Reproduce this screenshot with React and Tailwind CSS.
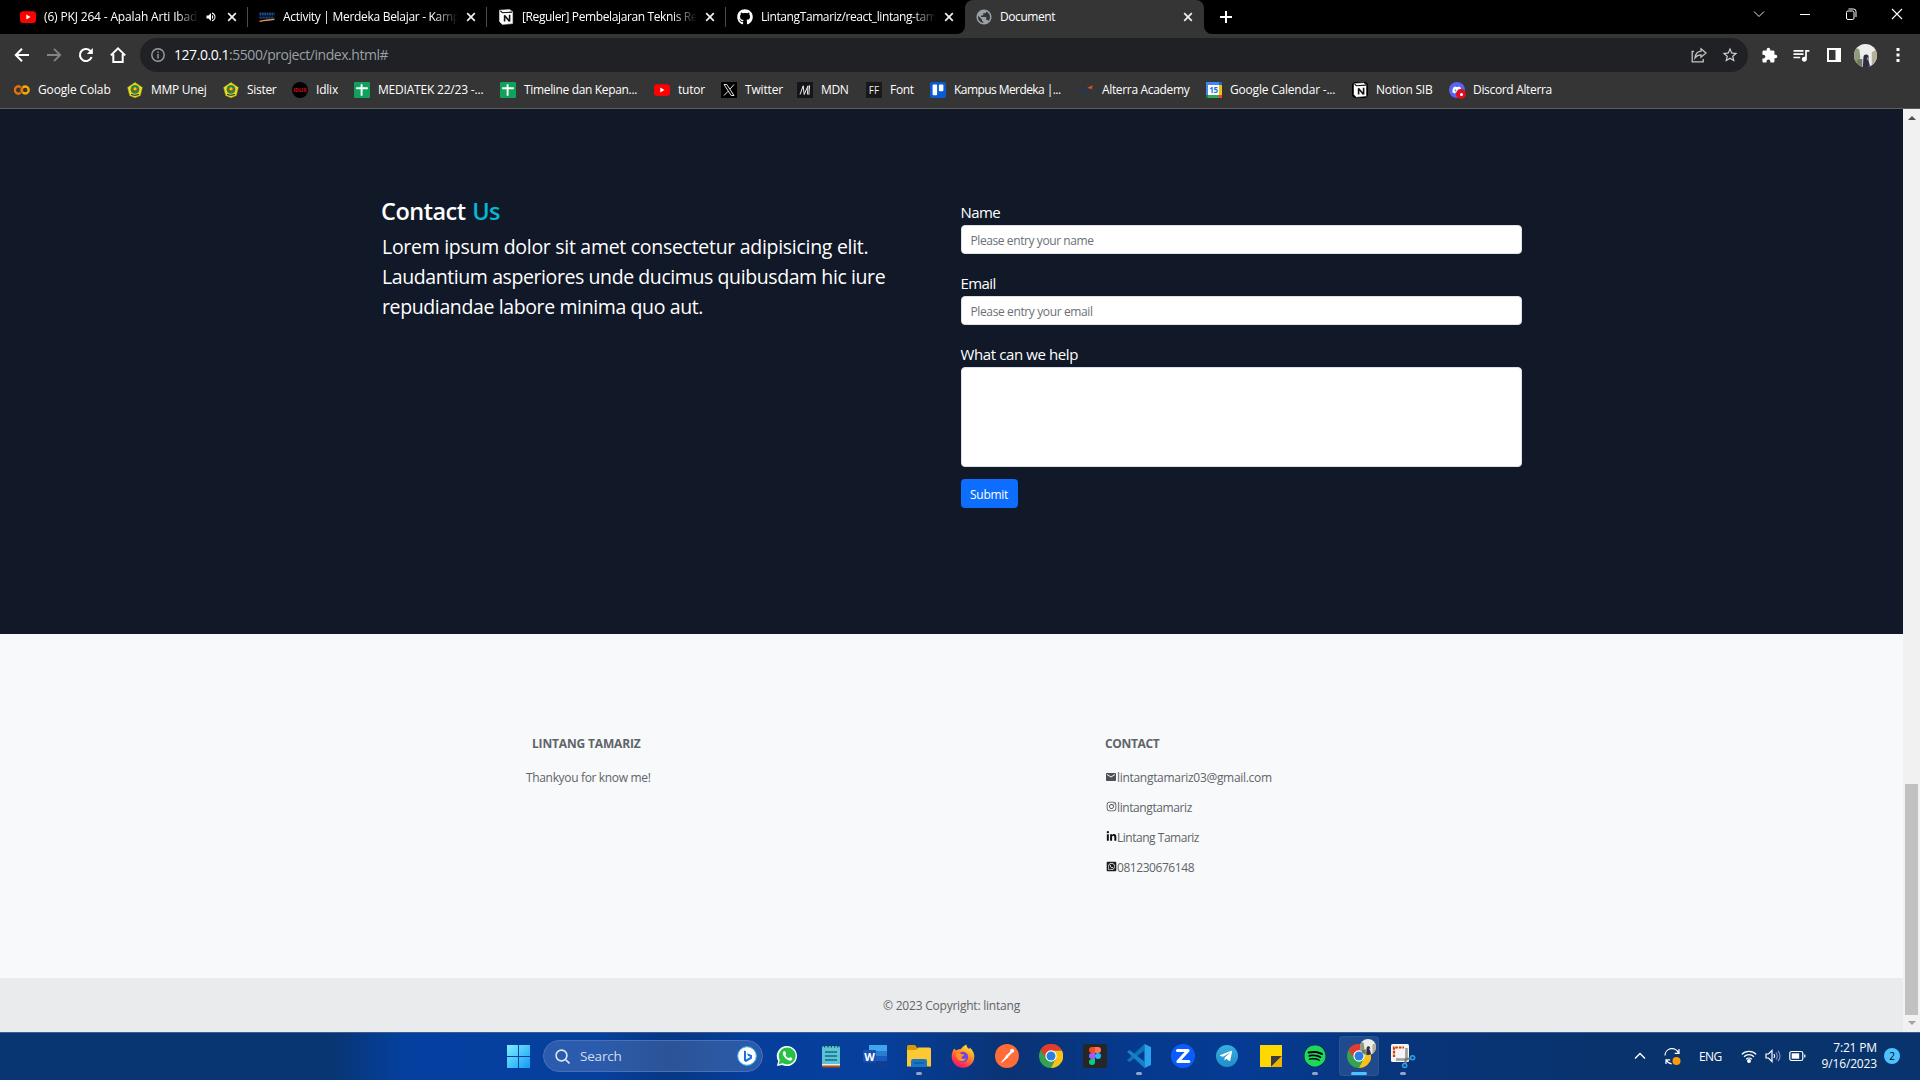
import { FaGithub, FaSpotify, FaDiscord, FaLinkedinIn, FaWhatsappSquare, FaInstagram, FaTelegramPlane } from "react-icons/fa";
import { MdEmail, MdExtension, MdQueueMusic, MdPublic, MdVolumeUp, MdStarBorder } from "react-icons/md";

/* ---------- small shared pieces ---------- */

function YoutubeIcon() {
  return (
    <svg viewBox="0 0 16 16" className="size-4">
      <rect y="2.3" width="16" height="11.6" rx="3" fill="#f00" />
      <path d="M6.3 5.6v5l4.2-2.5z" fill="#fff" />
    </svg>
  );
}

function NotionIcon({ dark }) {
  return (
    <div className={dark ? "flex size-4 items-center justify-center rounded-sm bg-black" : "flex size-4 items-center justify-center"}>
      <svg viewBox="0 0 16 16" className="size-4">
        <path d="M1.5 1.2 11.6.6 14.6 2.8V14.6L4.2 15.4 1.5 12.4z" fill="#fff" stroke={dark ? "#000" : "#ddd"} strokeWidth=".6" />
        <path d="M2.4 1.9 4.3 3.7 14 3.1" fill="none" stroke="#111" strokeWidth="1.1" />
        <path d="M6.6 12.6V6.2M6.4 6.2 11.6 12.4M11.6 12.6V5.8" fill="none" stroke="#111" strokeWidth="1.6" />
      </svg>
    </div>
  );
}

function KampusIcon() {
  return (
    <svg viewBox="0 0 16 16" className="size-4">
      <path d="M.5 5h15" stroke="#1a4f94" strokeWidth="3" strokeDasharray="1.8 .6" />
      <path d="M.5 8.6h15" stroke="#143f78" strokeWidth="2.4" strokeDasharray="2.4 .5" />
      <path d="M.5 12.4c5-1.3 9-1.2 15-2" stroke="#e89a4f" strokeWidth="1.3" fill="none" />
    </svg>
  );
}

function CrestIcon() {
  return (
    <svg viewBox="0 0 16 16" className="size-4">
      <path d="M8 .4 15.4 5.4 13.3 13.6 8 15.8 2.7 13.6.6 5.4z" fill="#e9dc28" stroke="#b9ac16" strokeWidth=".5" />
      <circle cx="8" cy="7.4" r="4.4" fill="#1c8a3f" />
      <path d="M5.2 8.4a2.8 3.2 0 0 1 5.6 0z" fill="#e33b22" />
      <circle cx="8" cy="6.8" r="1.5" fill="#f3c41f" />
      <path d="M4.2 12.3q3.8 2 7.6 0" stroke="#222" strokeWidth="1.1" fill="none" />
    </svg>
  );
}

function SheetIcon() {
  return (
    <svg viewBox="0 0 16 16" className="size-4">
      <rect width="16" height="16" rx="1" fill="#10a15c" />
      <path d="M2.2 6.2h11.6M7.6 2.2v11.6" stroke="#fff" strokeWidth="1.9" />
    </svg>
  );
}

function ColabIcon() {
  return (
    <svg viewBox="0 0 16 16" className="size-4" fill="none" strokeWidth="2.3">
      <path d="M6.6 5.3A3.5 3.5 0 1 0 6.6 10.7" stroke="#e8710a" />
      <circle cx="11.2" cy="8" r="3.5" stroke="#f9ab00" />
      <path d="M8.8 10.6A3.5 3.5 0 0 1 8.8 5.4" stroke="#e8710a" />
    </svg>
  );
}

function ChromeIcon() {
  return (
    <svg viewBox="0 0 24 24" className="size-6">
      <circle cx="12" cy="12" r="12" fill="#34a350" />
      <path d="M12 6.5H22.9A12 12 0 0 1 12 24L16.76 14.75z" fill="#fbc116" />
      <path d="M12 6.5H22.9A12 12 0 0 0 1.6 6L7.24 14.75A5.5 5.5 0 0 1 12 6.5z" fill="#e33b2e" />
      <circle cx="12" cy="12" r="5.7" fill="#fff" />
      <circle cx="12" cy="12" r="4.5" fill="#2a7de1" />
    </svg>
  );
}

function CloseIcon() {
  return (
    <svg viewBox="0 0 16 16" className="size-4 shrink-0" stroke="#f1f1f1" strokeWidth="1.7">
      <path d="M4.2 4.2l7.6 7.6M11.8 4.2l-7.6 7.6" />
    </svg>
  );
}

function Avatar({ className }) {
  return (
    <svg viewBox="0 0 22 22" className={className}>
      <clipPath id="avatarClip"><circle cx="11" cy="11" r="11" /></clipPath>
      <g clipPath="url(#avatarClip)">
        <rect width="22" height="22" fill="#eceeea" />
        <path d="M0 3 5 5 6 12 5 22H0z" fill="#8d9a7b" />
        <path d="M17 8 22 5V22H17z" fill="#b3b19a" />
        <path d="M3 15 8 14 8 22H2z" fill="#6f7b62" />
        <path d="M9 13q0-3 2.600-3t2.400 2.600l-.3 2.400 1.800 7H8.500z" fill="#2a2d45" />
        <path d="M12.300 12.800h1.600v2.200h-1.600z" fill="#b98a74" />
      </g>
    </svg>
  );
}

/* ---------- browser tabs ---------- */

function Tab({ icon, title, sound, active, divider, tracking }) {
  return (
    <div className={active ? "relative flex h-[34px] w-[239px] items-center rounded-t-lg bg-[#353535] pl-[11px] pr-2" : "relative flex h-[34px] w-[239px] items-center pl-[11px] pr-2"}>
      <div className="size-4 shrink-0">{icon}</div>
      <div className={(sound ? "w-[154px] " : "w-[175px] ") + "ml-2 overflow-hidden whitespace-nowrap text-xs text-white " + tracking + (active ? "" : " [mask-image:linear-gradient(to_right,#000_86%,transparent)]")}>{title}</div>
      {sound && <MdVolumeUp className="ml-[7px] size-3 shrink-0 text-white" />}
      <div className="ml-auto"><CloseIcon /></div>
      {divider && <div className="absolute right-0 top-[7px] h-5 w-px bg-[#4d4d4d]" />}
      {active && (
        <>
          <svg viewBox="0 0 8 8" className="absolute -left-2 bottom-0 size-2"><path d="M8 0v8H0a8 8 0 0 0 8-8" fill="#353535" /></svg>
          <svg viewBox="0 0 8 8" className="absolute -right-2 bottom-0 size-2"><path d="M0 0v8h8a8 8 0 0 1-8-8" fill="#353535" /></svg>
        </>
      )}
    </div>
  );
}

function TabStrip() {
  return (
    <div className="flex h-[34px] bg-black pl-[9px]">
      <Tab icon={<YoutubeIcon />} title="(6) PKJ 264 - Apalah Arti Ibadah" sound divider tracking="tracking-[-0.16px]" />
      <Tab icon={<KampusIcon />} title="Activity | Merdeka Belajar - Kampus" divider tracking="tracking-[-0.3px]" />
      <Tab icon={<NotionIcon />} title="[Reguler] Pembelajaran Teknis Reac" divider tracking="tracking-[-0.38px]" />
      <Tab icon={<FaGithub className="size-4 text-white" />} title="LintangTamariz/react_lintang-tamariz" tracking="tracking-[-0.4px]" />
      <Tab icon={<MdPublic className="-m-px size-[18px] text-[#9aa0a6]" />} title="Document" active tracking="tracking-[-0.42px]" />
      <svg viewBox="0 0 14 14" className="ml-[15px] mt-2.5 size-3.5" stroke="#fff" strokeWidth="2"><path d="M7 1v12M1 7h12" /></svg>
      <div className="ml-auto flex h-7 items-center">
        <svg viewBox="0 0 12 12" className="mr-[34px] size-3" fill="none" stroke="#e8e8e8"><path d="M1 3.5l5 5 5-5" /></svg>
        <svg viewBox="0 0 12 12" className="mr-[34px] size-3" stroke="#fff"><path d="M1 6.5h10" /></svg>
        <svg viewBox="0 0 12 12" className="mr-[34px] size-3" fill="none" stroke="#fff"><rect x="1.5" y="3" width="7.5" height="8.5" rx="1.5" /><path d="M3.5 1h5a2.5 2.5 0 0 1 2.5 2.5V9" /></svg>
        <svg viewBox="0 0 12 12" className="mr-[17px] size-3" stroke="#fff" strokeWidth="1.1"><path d="M1 1l10 10M11 1L1 11" /></svg>
      </div>
    </div>
  );
}

/* ---------- address bar ---------- */

function Toolbar() {
  return (
    <div className="flex h-[42px] items-center bg-[#353535] pl-3.5">
      <svg viewBox="0 0 16 16" className="mr-4 size-4" fill="none" stroke="#fff" strokeWidth="2"><path d="M15 8H2M8 1.8 1.8 8 8 14.2" /></svg>
      <svg viewBox="0 0 16 16" className="mr-4 size-4" fill="none" stroke="#848484" strokeWidth="1.8"><path d="M1 8h13M8 1.8 14.2 8 8 14.2" /></svg>
      <svg viewBox="0 0 16 16" className="mr-4 size-4" fill="none" stroke="#fff" strokeWidth="2.1"><path d="M13.6 10A6 6 0 1 1 12.2 3.8L14 5.4" /><path d="M14.8 1v6h-6z" fill="#fff" stroke="none" /></svg>
      <svg viewBox="0 0 16 16" className="mr-[14px] size-4" fill="none" stroke="#fff" strokeWidth="2"><path d="M.8 8.4 8 1.4l7.2 7M3.3 7v8h9.4V7" /></svg>
      <div className="flex h-[34px] w-[1608px] items-center rounded-full bg-[#202124] pl-[11px] pr-[9px]">
        <svg viewBox="0 0 14 14" className="size-3.5" fill="none" stroke="#9aa0a6" strokeWidth="1.4"><circle cx="7" cy="7" r="6.2" /><path d="M7 6v4.4M7 3.4v1.5" /></svg>
        <div className="ml-[9px] whitespace-nowrap text-sm tracking-[-0.45px] text-[#9aa0a6]"><span className="text-white">127.0.0.1</span>:5500/project/index.html#</div>
        <svg viewBox="0 0 16 16" className="ml-auto size-4" fill="none" stroke="#c4c4c4" strokeWidth="1.3"><path d="M3 4.5H1.2v10.4h11v-3" /><path d="M10 1.8 15 6l-5 4.2V7.8C7.4 7.8 5.500 8.800 4 10.800 4.500 7 6.600 4.500 10 4.200z" /></svg>
        <MdStarBorder className="ml-[14px] size-[18px] text-[#d0d0d0]" />
      </div>
      <MdExtension className="ml-[13px] size-[17px] text-white" />
      <MdQueueMusic className="ml-[13px] size-[20px] text-white" />
      <svg viewBox="0 0 14 14" className="ml-[16px] size-3.5" fill="none" stroke="#fff" strokeWidth="2"><path d="M1 1h12v12H1z" /><path d="M8.5 1h4.500v12H8.500z" fill="#fff" stroke="none" /></svg>
      <Avatar className="ml-[13px] size-[23px]" />
      <svg viewBox="0 0 4 16" className="ml-[19px] h-4 w-1" fill="#fff"><rect x=".5" y="1" width="3" height="3" /><rect x=".5" y="6.500" width="3" height="3" /><rect x=".5" y="12" width="3" height="3" /></svg>
    </div>
  );
}

/* ---------- bookmarks ---------- */

const bookmarks = [
  { label: "Google Colab", cell: "w-[113px]", tracking: "tracking-[-0.15px]", icon: <ColabIcon /> },
  { label: "MMP Unej", cell: "w-[96px]", tracking: "tracking-[-0.29px]", icon: <CrestIcon /> },
  { label: "Sister", cell: "w-[69px]", tracking: "tracking-[-0.3px]", icon: <CrestIcon /> },
  { label: "Idlix", cell: "w-[62px]", tracking: "tracking-[-0.2px]", icon: <div className="flex size-4 items-center justify-center rounded-full bg-black text-[5px] font-bold leading-none text-[#e50914]">IDLIX</div> },
  { label: "MEDIATEK 22/23 -...", cell: "w-[146px]", tracking: "tracking-[-0.2px]", icon: <SheetIcon /> },
  { label: "Timeline dan Kepan...", cell: "w-[154px]", tracking: "tracking-[-0.34px]", icon: <SheetIcon /> },
  { label: "tutor", cell: "w-[67px]", tracking: "tracking-[-0.2px]", icon: <YoutubeIcon /> },
  { label: "Twitter", cell: "w-[76px]", tracking: "tracking-[-0.15px]", icon: <svg viewBox="0 0 16 16" className="size-4" fill="none" stroke="#fff"><rect width="16" height="16" fill="#000" stroke="none" /><path d="M3 2.500h2.800l7.200 11h-2.800zM13 2.500 9 7M7 9.300l-4 4.200" strokeWidth=".9" /></svg> },
  { label: "MDN", cell: "w-[69px]", tracking: "tracking-[-0.35px]", icon: <svg viewBox="0 0 16 16" className="size-4"><rect width="16" height="16" fill="#15141a" /><path d="M3 12.500 6.200 3.800 7.200 12.500 11 3.800 10.400 12.500M12.600 3.400l-.8 9.400" fill="none" stroke="#eee" strokeWidth="1" /></svg> },
  { label: "Font", cell: "w-[64px]", tracking: "tracking-[-0.3px]", icon: <div className="flex size-4 items-center justify-center bg-[#181818] text-[10px] leading-none text-[#eee]">FF</div> },
  { label: "Kampus Merdeka |...", cell: "w-[149px]", tracking: "tracking-[-0.57px]", icon: <svg viewBox="0 0 16 16" className="size-4"><rect width="16" height="16" rx="2" fill="#0b5bd3" /><rect x="2.600" y="2.600" width="4.500" height="10.600" rx="1" fill="#fff" /><rect x="8.900" y="2.600" width="4.500" height="6.600" rx="1" fill="#fff" /></svg> },
  { label: "Alterra Academy", cell: "-ml-px w-[128px]", tracking: "tracking-[-0.34px]", icon: <svg viewBox="0 0 16 16" className="size-4" fill="none"><circle cx="3.500" cy="9" r="1.900" stroke="#1d3b66" /><path d="M7 11V7.200q3-.7 3 3.800M12 8v3" stroke="#1d3b66" /><path d="M9 6 14.500 3.200 14 7z" fill="#d9572b" /></svg> },
  { label: "Google Calendar -...", cell: "w-[146px]", tracking: "tracking-[-0.2px]", icon: <div className="grid size-4 grid-cols-[2px_1fr_3px] grid-rows-[3px_1fr_3px] bg-[#4285f4]"><i /><i /><i className="bg-[#1a67d2]" /><i /><div className="flex items-center justify-center bg-white text-[8px] font-bold leading-none tracking-tighter text-[#1a73e8]">15</div><i className="bg-[#fbbc04]" /><i className="bg-[#188038]" /><i className="bg-[#34a853]" /><i className="bg-[#ea4335]" /></div> },
  { label: "Notion SIB", cell: "w-[97px]", tracking: "tracking-[-0.25px]", icon: <NotionIcon dark /> },
  { label: "Discord Alterra", cell: "w-[110px]", tracking: "tracking-[-0.33px]", icon: <div className="relative flex size-4 items-center justify-center rounded-full bg-[#5865f2]"><FaDiscord className="size-2.5 text-white" /><div className="absolute -bottom-px -right-px flex size-[10px] items-center justify-center rounded-full bg-[#e00b1c]"><div className="size-[3px] rounded-full bg-white" /></div></div> },
];

function BookmarksBar() {
  return (
    <div className="flex h-[33px] items-center border-b border-[#5c5c5c] bg-[#353535] pb-1 pl-3.5">
      {bookmarks.map((b) => (
        <div key={b.label} className={"flex shrink-0 items-center gap-2 " + b.cell}>
          <div className="size-4 shrink-0">{b.icon}</div>
          <span className={"whitespace-nowrap text-xs leading-4 text-white " + b.tracking}>{b.label}</span>
        </div>
      ))}
    </div>
  );
}

/* ---------- page ---------- */

function Contact() {
  return (
    <section className="flex h-[525px] bg-[#111827] pl-[381px] text-white">
      <div className="w-[579.5px] pt-[87px]">
        <h2 className="mb-[6px] text-[23.5px] font-semibold leading-[30px] tracking-[-0.5px]">Contact <span className="ml-px text-[#06b6d4]">Us</span></h2>
        <div className="whitespace-nowrap pl-px text-[19.5px] leading-[30px]">
          <p className="tracking-[-0.29px]">Lorem ipsum dolor sit amet consectetur adipisicing elit.</p>
          <p className="tracking-[-0.41px]">Laudantium asperiores unde ducimus quibusdam hic iure</p>
          <p className="tracking-[-0.38px]">repudiandae labore minima quo aut.</p>
        </div>
      </div>
      <form className="flex w-[561px] flex-col pt-[93px]">
        <label className="mb-[3px] text-[15px] leading-5 tracking-[-0.6px]">Name</label>
        <input placeholder="Please entry your name" className="mb-[19px] h-[29px] rounded border border-[#dee2e6] bg-white px-[9px] pt-0.5 text-xs tracking-[-0.41px] placeholder:text-[#6b7075]" />
        <label className="mb-[3px] text-[15px] leading-5 tracking-[-0.6px]">Email</label>
        <input placeholder="Please entry your email" className="mb-[19px] h-[29px] rounded border border-[#dee2e6] bg-white px-[9px] pt-0.5 text-xs tracking-[-0.38px] placeholder:text-[#6b7075]" />
        <label className="mb-[3px] text-[15px] leading-5 tracking-[-0.39px]">What can we help</label>
        <textarea className="mb-3 h-[100px] resize-none rounded border border-[#dee2e6] bg-white" />
        <button type="button" className="h-[29px] w-[57px] rounded bg-[#0d6efd] pt-[3px] text-xs tracking-[-0.3px]">Submit</button>
      </form>
    </section>
  );
}

const contacts = [
  { text: "lintangtamariz03@gmail.com", tracking: "tracking-[-0.3px]", icon: <MdEmail className="size-3 text-[#4b5157]" /> },
  { text: "lintangtamariz", tracking: "tracking-[-0.4px]", icon: <FaInstagram className="size-[11px] text-[#4b5157]" /> },
  { text: "Lintang Tamariz", tracking: "tracking-[-0.48px]", icon: <FaLinkedinIn className="size-[11px] text-[#111]" /> },
  { text: "081230676148", tracking: "tracking-[-0.44px]", icon: <FaWhatsappSquare className="size-[11px] text-[#1b1f24]" /> },
];

function Footer() {
  return (
    <footer className="text-xs leading-5 text-[#5f6469]">
      <div className="flex h-[344px] bg-[#f8f9fb] pl-[526px] pt-[100px]">
        <div className="w-[579px]">
          <h6 className="mb-3.5 pl-1.5 font-bold tracking-[-0.16px]">LINTANG TAMARIZ</h6>
          <p className="tracking-[-0.34px]">Thankyou for know me!</p>
        </div>
        <div>
          <h6 className="mb-3.5 font-bold tracking-[-0.35px]">CONTACT</h6>
          <div className="flex flex-col gap-2.5">
            {contacts.map((c) => (
              <p key={c.text} className="flex items-center">
                <span className="flex w-[12px] justify-center pb-[3px]">{c.icon}</span>
                <span className={c.tracking}>{c.text}</span>
              </p>
            ))}
          </div>
        </div>
      </div>
      <div className="flex h-[54px] items-center justify-center bg-[#eaebed] pt-0.5 tracking-[-0.22px]">© 2023 Copyright: lintang</div>
    </footer>
  );
}

function Scrollbar() {
  return (
    <div className="flex w-[17px] flex-col items-center bg-[#f1f1f1]">
      <svg viewBox="0 0 8 4" className="mt-[7px] h-1 w-2" fill="#505050"><path d="M4 0l4 4H0z" /></svg>
      <div className="mt-[664px] h-[231px] w-[13px] bg-[#c1c1c1]" />
      <svg viewBox="0 0 8 4" className="mt-[6px] h-1 w-2" fill="#a3a3a3"><path d="M0 0h8L4 4z" /></svg>
    </div>
  );
}

/* ---------- taskbar ---------- */

function App24({ children }) {
  return <svg viewBox="0 0 24 24" className="size-6">{children}</svg>;
}

const apps = [
  { id: "whatsapp", icon: <div className="flex size-[22px] items-center justify-center"><App24><path d="M12 1A11 11 0 1 1 6.700 21.700L1 23l1.400-5.500A11 11 0 0 1 12 1z" fill="#fff" /><circle cx="12.200" cy="12" r="9.300" fill="#25c244" /><path d="M3 21l1.200-5 4 3.600z" fill="#25c244" /><path d="M8.500 6.800c-2.500 2 0 6 2.500 8.200s5 3 6.500 1c.8-1.200 0-1.800-1.600-2.600-1-.5-1.400 1.300-2.300.9-1.500-.7-2.700-2-3.200-3.200-.3-.8 1-1 .5-2.200-.6-1.500-1.200-2.900-2.400-2.100z" fill="#fff" /></App24></div> },
  { id: "notepad", icon: <App24><rect x="3" y="2" width="18" height="20" rx="1.500" fill="#5fc3d3" /><path d="M3 21h18v1.500q0 1-1 1H4q-1 0-1-1z" fill="#b4520f" /><path d="M3 20h18v1.500H3z" fill="#e8edf0" /><path d="M6 8h12M6 12h12M6 16h12" stroke="#0d6f86" strokeWidth="1.400" /><path d="M5.500 0v3.500M9 0v3.500M12.300 0v3.500M15.600 0v3.500M18.800 0v3.500" stroke="#0b4b63" strokeWidth="1.300" /></App24> },
  { id: "word", icon: <div className="relative size-6"><App24><path d="M6 1h18v6H6z" fill="#41a5ee" /><path d="M6 7h18v5H6z" fill="#2b7cd3" /><path d="M6 12h18v5H6z" fill="#185abd" /><path d="M6 17h18v5H6z" fill="#103f91" /><rect y="6" width="13" height="12.500" rx="1" fill="#174fb5" /></App24><span className="absolute left-0 top-[6px] w-[13px] text-center text-[11px] font-bold leading-[13px] text-white">W</span></div> },
  { id: "explorer", running: true, icon: <App24><path d="M0 2.500Q0 1 1.500 1H8l2 2.500V7H0z" fill="#d99a06" /><path d="M0 6h9l2-2.500h11.500Q24 3.500 24 5v17.500H0z" fill="#fcc934" /><path d="M4 23v-6q0-2 2-2h12q2 0 2 2v6z" fill="#1976c5" /><path d="M7 19h10" stroke="#0f5ba0" strokeWidth="1.500" /></App24> },
  { id: "firefox", icon: <App24><defs><linearGradient id="fx" x1=".8" y1="0" x2=".3" y2="1"><stop offset="0" stopColor="#fff13a" /><stop offset=".4" stopColor="#ff9a1f" /><stop offset=".8" stopColor="#ff3350" /><stop offset="1" stopColor="#e31587" /></linearGradient></defs><path d="M3.300 4.500 5 6.500C6 5.600 8 5 9.500 5.200 11 3.500 13 1.500 15.500.5c0 2 .8 3 2.700 4.500.5-.4.600-1 .6-1.500C22 6.500 23.300 9.500 23.300 12.500a11.300 11.300 0 1 1-22.600 0c0-3 .9-6 2.600-8z" fill="url(#fx)" /><circle cx="12" cy="13" r="5.200" fill="#7542e5" /><path d="M5 10c2-1.600 4-1 5.500.2l3 .3c-.5 1.500-3 1.500-3 3.100 0 1.400 2.500 2 4.500.4-1 3.400-4 4-6.500 2.500S5.500 13 5 10z" fill="#ff9425" /></App24> },
  { id: "postman", icon: <App24><circle cx="12" cy="12" r="12" fill="#ff6c37" /><path d="M5.500 19l5.500-7 2.500 1-5.500 4.700z" fill="#fff" /><path d="M10.500 12 15.500 7.500l1.500 1.500-4.500 4.500z" fill="#fff" /><circle cx="17.200" cy="6.800" r="2" fill="#fff" /></App24> },
  { id: "chrome", icon: <ChromeIcon /> },
  { id: "figma", icon: <App24><rect width="24" height="24" rx="1.500" fill="#262626" /><path d="M12 3H9a3 3 0 0 0 0 6h3z" fill="#f24e1e" /><path d="M12 3h3a3 3 0 0 1 0 6h-3z" fill="#ff7262" /><path d="M12 9H9a3 3 0 0 0 0 6h3z" fill="#a259ff" /><circle cx="15" cy="12" r="3" fill="#1abcfe" /><path d="M12 15H9a3 3 0 1 0 3 3z" fill="#0acf83" /></App24> },
  { id: "vscode", running: true, icon: <App24><path d="M17.500 0v6.500L2.500 18 0 16.200z" fill="#0b75b8" /><path d="M0 7.800 2.500 6l15 11.500V24z" fill="#1482c9" /><path d="M17.500 0 24 3v18l-6.500 3z" fill="#2ba2ee" /></App24> },
  { id: "zoom", icon: <App24><circle cx="12" cy="12" r="12" fill="#0b5cff" /><path d="M6.500 6.500H17L7 17.500H17.800" fill="none" stroke="#fff" strokeWidth="3.200" strokeLinejoin="round" strokeLinecap="round" /></App24> },
  { id: "telegram", icon: <div className="flex size-[22px] items-center justify-center rounded-full bg-gradient-to-b from-[#37aee2] to-[#1e8fc8]"><FaTelegramPlane className="mr-0.5 size-3.5 text-white" /></div> },
  { id: "sticky", icon: <App24><path d="M1 1h22v22H1z" fill="#ffd800" /><path d="M12 12h11L12 23z" fill="#3b3b3b" /><path d="M23 12v11H12z" fill="#eeb200" /></App24> },
  { id: "spotify", running: true, icon: <div className="size-[22px] rounded-full bg-black"><FaSpotify className="size-[22px] text-[#1ed760]" /></div> },
  { id: "chrome-profile", current: true, icon: <div className="relative"><ChromeIcon /><Avatar className="absolute -right-[5px] -top-[5px] size-4" /></div> },
  { id: "snip", running: true, icon: <svg viewBox="0 0 24 24" className="size-6 overflow-visible"><rect width="18" height="18" rx="1.500" fill="#f3f3f3" /><path d="M3 13V3.500h10" fill="none" stroke="#d83b01" strokeWidth="2.200" strokeDasharray="2.600 1" /><path d="M15.500 4v11.500H5" fill="none" stroke="#9a9a9a" strokeWidth="2.600" /><path d="M14 15l6 -.5M14.500 15v5" stroke="#777" strokeWidth="2" /><circle cx="21.600" cy="13.700" r="2" fill="none" stroke="#2aa5e8" strokeWidth="1.500" /><circle cx="13.700" cy="21.500" r="2" fill="none" stroke="#2aa5e8" strokeWidth="1.500" /></svg> },
];

function Taskbar() {
  return (
    <div className="flex h-12 items-center border-t border-[#3a5f8f] bg-[linear-gradient(90deg,#083672_0px,#083672_330px,#0540a0_405px,#063f9e_600px,#073784_670px,#053e9c_750px,#063f9c_880px,#0a3373_1010px,#06398c_1120px,#053b94_1240px,#08357a_1400px,#08336d_1600px)] pb-px pl-[507px] text-xs text-white">
      <svg viewBox="0 0 23 23" className="size-[23px]">
        <defs><linearGradient id="win" x1="0" y1="0" x2="1" y2="1"><stop offset="0" stopColor="#7ff0ff" /><stop offset="1" stopColor="#119bf5" /></linearGradient></defs>
        <path d="M0 0h11v11H0zM12 0h11v11H12zM0 12h11v11H0zM12 12h11v11H12z" fill="url(#win)" />
      </svg>
      <div className="ml-[13px] flex h-8 w-[220px] items-center rounded-full border border-[#4a6fb5] bg-white/15 pl-[11px] pr-[5px]">
        <svg viewBox="0 0 15 15" className="size-[15px]" fill="none" stroke="#dfe6f2" strokeWidth="1.600"><circle cx="6.500" cy="6.500" r="5.400" /><path d="M10.500 10.500l4 4" /></svg>
        <span className="ml-[10px] text-[13.500px] tracking-[-0.2px] text-[#d3dcec]">Search</span>
        <svg viewBox="0 0 20 20" className="ml-auto size-5"><circle cx="10" cy="10" r="9.300" fill="#fff" stroke="#3bbdf2" strokeWidth="1" /><path d="M7 4.500l2 .8v8.200l4.500-2.600-2.500-1.200-1-2.500 5 2v3.200L9 16l-2-1.200z" fill="#1b6fe0" /></svg>
      </div>
      <div className="ml-0.5 flex">
        {apps.map((a) => (
          <div key={a.id} className="relative flex h-[46px] w-11 items-center justify-center">
            {a.current && <div className="absolute inset-x-0.5 inset-y-[3px] rounded border border-white/5 bg-white/10" />}
            <div className="relative">{a.icon}</div>
            {a.running && <div className="absolute bottom-[4px] left-[19px] h-[3px] w-1.5 rounded-full bg-[#8fa6cc]" />}
            {a.current && <div className="absolute bottom-[4px] left-3.5 h-[3px] w-4 rounded-full bg-[#4cc2ff]" />}
          </div>
        ))}
      </div>
      <div className="ml-auto flex items-center pr-5">
        <svg viewBox="0 0 12 8" className="mr-[18px] h-2 w-3" fill="none" stroke="#fff" strokeWidth="1.400"><path d="M1 6.500l5-5 5 5" /></svg>
        <svg viewBox="0 0 17 17" className="mr-[18px] size-[17px]" fill="none" stroke="#fff" strokeWidth="1.200"><path d="M1 7.500A7 7 0 0 1 14.500 5M15 1v4.300h-4.300M2 16v-4.200h4.200M2.200 12q2 3.500 5.500 3.800" /><circle cx="12.500" cy="13" r="4" fill="#ff9a0a" stroke="none" /></svg>
        <span className="mr-[19px] w-[23px] pt-0.5 tracking-[-0.65px]">ENG</span>
        <svg viewBox="0 0 16 14" className="mr-2 h-3.5 w-4" fill="none" stroke="#fff" strokeWidth="1.300"><path d="M.8 5.400a10 10 0 0 1 14.400 0M3 7.800a7 7 0 0 1 10 0M5.200 10.200a4 4 0 0 1 5.600 0" /><circle cx="8" cy="12" r="1.300" fill="#fff" /></svg>
        <svg viewBox="0 0 16 14" className="mr-2 h-3.5 w-4" fill="none" stroke="#fff" strokeWidth="1.200"><path d="M1 5h2.500L7 1.500v11L3.500 9H1zM9 5q1.300 2 0 4" /><path d="M11 3.500q2.600 3.500 0 7M13 1.800q4 5.200 0 10.400" stroke="#7d93b8" /></svg>
        <svg viewBox="0 0 17 12" className="h-3 w-[17px]" fill="none" stroke="#fff" strokeWidth="1.200"><rect x=".8" y="1.500" width="13" height="9" rx="1.800" /><rect x="2.700" y="3.300" width="7.500" height="5.400" fill="#fff" stroke="none" /><path d="M15.800 4.500v3" /></svg>
        <div className="ml-3 flex w-[59px] flex-col items-end leading-4">
          <span className="tracking-[-0.15px]">7:21 PM</span>
          <span className="tracking-[-0.15px]">9/16/2023</span>
        </div>
        <div className="ml-[7px] flex size-4 items-center justify-center rounded-full bg-[#4cc2ff] text-[10px] leading-none text-black">2</div>
      </div>
    </div>
  );
}

export default function App() {
  return (
    <div className="flex h-[1080px] w-[1920px] flex-col overflow-hidden font-['Open_Sans','Noto_Sans',sans-serif]">
      <TabStrip />
      <Toolbar />
      <BookmarksBar />
      <div className="flex h-[923px]">
        <main className="w-[1903px]">
          <Contact />
          <Footer />
        </main>
        <Scrollbar />
      </div>
      <Taskbar />
    </div>
  );
}
